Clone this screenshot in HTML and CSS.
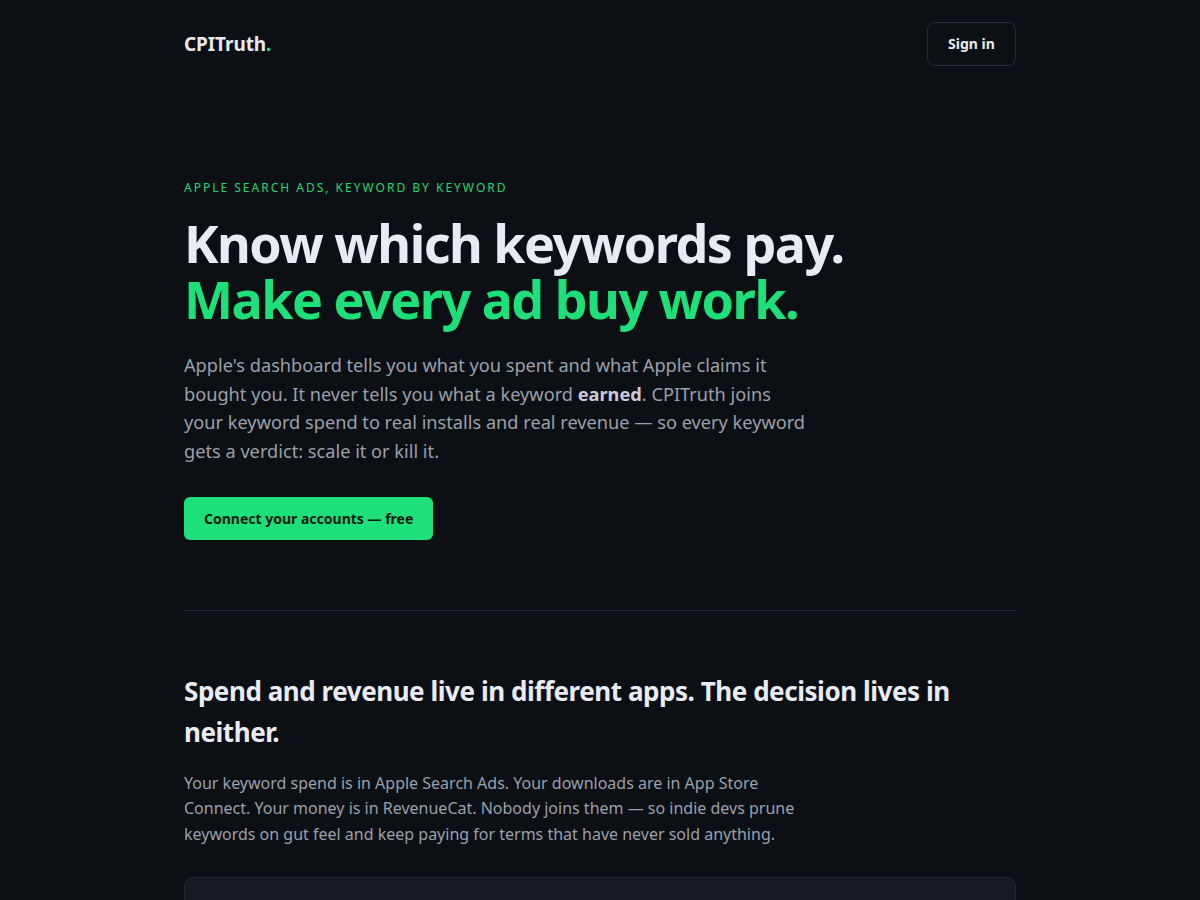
FILE: index.html
```html
<!DOCTYPE html>
<html lang="en">
<head>
<meta charset="utf-8">
<title>CPITruth</title>
<link rel="stylesheet" href="styles.css">
</head>
<body>
<div class="wrap">
  <header class="top">
    <div class="logo">CPITruth<span class="dot">.</span></div>
    <a class="signin" href="#">Sign in</a>
  </header>
  <section class="hero">
    <div class="eyebrow">APPLE SEARCH ADS, KEYWORD BY KEYWORD</div>
    <h1 class="title">Know which keywords pay.<br><span class="accent">Make every ad buy work.</span></h1>
    <p class="lead">Apple's dashboard tells you what you spent and what Apple claims it bought you. It never tells you what a keyword <strong>earned</strong>. CPITruth joins your keyword spend to real installs and real revenue — so every keyword gets a verdict: scale it or kill it.</p>
    <a class="cta" href="#">Connect your accounts — free</a>
  </section>
  <hr class="rule">
  <section class="problem">
    <h2 class="h2">Spend and revenue live in different apps. The decision lives in neither.</h2>
    <p class="body">Your keyword spend is in Apple Search Ads. Your downloads are in App Store Connect. Your money is in RevenueCat. Nobody joins them — so indie devs prune keywords on gut feel and keep paying for terms that have never sold anything.</p>
    <div class="card"></div>
  </section>
</div>
</body>
</html>
```
FILE: styles.css
```css
* { box-sizing: border-box; }
html, body { margin: 0; padding: 0; }
body {
  background: #0c0f14;
  color: #e8eaf2;
  font-family: "Noto Sans", "Open Sans", sans-serif;
}
.wrap {
  width: 832px;
  margin: 0 auto;
}
.top {
  display: flex;
  justify-content: space-between;
  align-items: center;
  padding-top: 22px;
  height: 66px;
}
.logo {
  font-weight: 700;
  font-size: 19px;
  letter-spacing: -0.1px;
  color: #e8eaf2;
}
.dot { color: #1ee07a; }
.signin {
  display: flex;
  align-items: center;
  justify-content: center;
  width: 89px;
  height: 44px;
  padding-bottom: 2px;
  border: 1px solid #262b35;
  border-radius: 8px;
  color: #e8eaf2;
  font-weight: 700;
  font-size: 14px;
  text-decoration: none;
}
.hero {
  padding-top: 114px;
  padding-bottom: 70px;
}
.eyebrow {
  color: #1ed872;
  font-size: 12px;
  letter-spacing: 2px;
  line-height: 16px;
}
.title {
  margin: 19px 0 0;
  font-size: 52px;
  line-height: 56px;
  font-weight: 700;
  letter-spacing: -1.5px;
  color: #e9ebf4;
}
.accent { color: #1ee07a; }
.lead {
  margin: 24px 0 0;
  max-width: 622px;
  font-size: 18.2px;
  line-height: 28.7px;
  color: #9aa0ad;
}
.lead strong { color: #c9ccd5; font-weight: 700; }
.cta {
  display: inline-flex;
  align-items: center;
  margin-top: 31px;
  height: 43px;
  padding: 0 20px;
  background: #1ee07a;
  color: #0b1a10;
  border-radius: 6px;
  font-weight: 700;
  font-size: 14px;
  text-decoration: none;
}
.rule {
  margin: 0;
  border: 0;
  border-top: 1px solid #252932;
}
.problem {
  padding-top: 60px;
}
.h2 {
  margin: 0;
  font-size: 26px;
  line-height: 41px;
  font-weight: 700;
  letter-spacing: -0.45px;
  color: #e9ebf4;
}
.body {
  margin: 18px 0 0;
  max-width: 625px;
  font-size: 16px;
  line-height: 25.5px;
  color: #9aa0ad;
}
.card {
  margin-top: 30px;
  height: 200px;
  background: #151921;
  border: 1px solid #232833;
  border-radius: 10px;
}
```
